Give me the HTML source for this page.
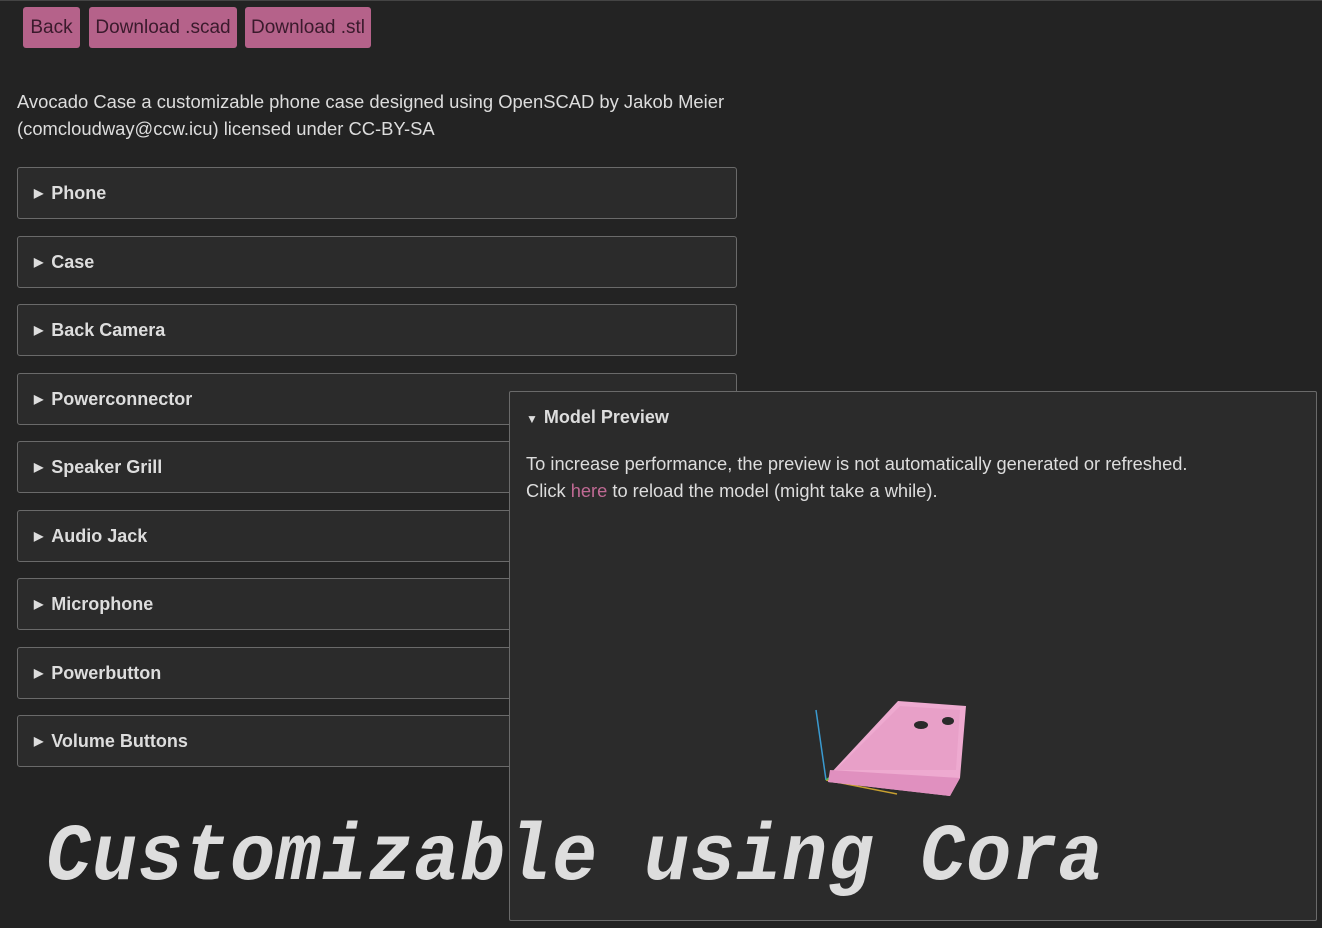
<!DOCTYPE html>
<html><head><style>
body{margin:0;width:1322px;height:928px;background:#232323;font-family:"Liberation Sans",sans-serif;color:#ddd;position:relative;overflow:hidden;border-top:1px solid #444;box-sizing:border-box}
.btn{position:absolute;top:6px;height:41px;background:#b5628a;color:#3a1a2c;border-radius:3px;font-size:19px;line-height:41px;text-align:center}
.intro{position:absolute;left:17px;top:87px;font-size:18.4px;line-height:27px;color:#ddd}
.acc{position:absolute;left:17px;width:718px;height:50px;border:1px solid #6a6a6a;border-radius:3px;background:#2b2b2b;box-sizing:content-box;font-weight:bold;font-size:18px;line-height:50px;color:#ddd}
.acc span{font-size:12px;margin:0 8px 0 16px;position:relative;top:-2px}
.prev{position:absolute;left:509px;top:390px;width:806px;height:528px;border:1px solid #6a6a6a;border-radius:2px;background:#2b2b2b}
.prev h{position:absolute;left:16px;top:15px;font-weight:bold;font-size:18px}
.prev p{position:absolute;left:16px;top:58px;margin:0;font-size:18.3px;line-height:27px}
.big{position:absolute;left:46px;top:811px;font-family:"Liberation Mono",monospace;font-style:italic;font-weight:bold;font-size:75px;color:#ddd;letter-spacing:1px;transform:scale(1,1.08);transform-origin:0 0}
</style></head><body>
<div class="btn" style="left:23px;width:57px">Back</div>
<div class="btn" style="left:89px;width:148px">Download .scad</div>
<div class="btn" style="left:245px;width:126px">Download .stl</div>
<div class="intro">Avocado Case a customizable phone case designed using OpenSCAD by Jakob Meier<br>(comcloudway@ccw.icu) licensed under CC-BY-SA</div>
<div class="acc" style="top:166px"><span>▶</span>Phone</div>
<div class="acc" style="top:235px"><span>▶</span>Case</div>
<div class="acc" style="top:303px"><span>▶</span>Back Camera</div>
<div class="acc" style="top:372px"><span>▶</span>Powerconnector</div>
<div class="acc" style="top:440px"><span>▶</span>Speaker Grill</div>
<div class="acc" style="top:509px"><span>▶</span>Audio Jack</div>
<div class="acc" style="top:577px"><span>▶</span>Microphone</div>
<div class="acc" style="top:646px"><span>▶</span>Powerbutton</div>
<div class="acc" style="top:714px"><span>▶</span>Volume Buttons</div>
<div class="prev"><h><span style="font-size:12px;margin-right:6px">▼</span>Model Preview</h>
<p>To increase performance, the preview is not automatically generated or refreshed.<br>Click <span style="color:#c06a94">here</span> to reload the model (might take a while).</p>
<svg style="position:absolute;left:290px;top:299px" width="170" height="115" viewBox="800 691 170 115">
<line x1="816" y1="710" x2="826" y2="780" stroke="#3a9ad0" stroke-width="1.5"/>
<line x1="826" y1="780" x2="897" y2="794" stroke="#c8a030" stroke-width="1.5"/>
<line x1="826" y1="780" x2="832" y2="776" stroke="#50c050" stroke-width="1.5"/>
<path d="M830 774 L898 701 L966 706 L960 778 L950 796 L828 782 Z" fill="#eeaad0"/>
<path d="M836 770 L900 706 L960 710 L956 770 Z" fill="#e8a0c8"/>
<path d="M828 782 L950 796 L960 778 L830 770 Z" fill="#e090bf"/>
<ellipse cx="921" cy="725" rx="7" ry="4" fill="#2a2a2a"/>
<ellipse cx="948" cy="721" rx="6" ry="4" fill="#2a2a2a"/>
</svg>
</div>
<div class="big">Customizable using Cora</div>
</body></html>
